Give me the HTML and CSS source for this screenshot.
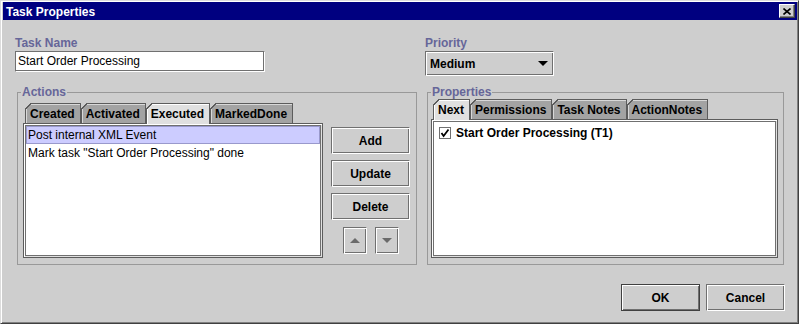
FILE: index.html
```html
<!DOCTYPE html>
<html lang="en">
<head>
    <meta charset="UTF-8">
    <meta name="viewport" content="width=device-width, initial-scale=1.0">
    <title>Task Properties</title>
    <link rel="stylesheet" href="styles.css">
</head>
<body>
    <div class="window">
        <div class="titlebar">
            <span class="title">Task Properties</span>
            <span class="close-btn">
                <svg width="8" height="7" viewBox="0 0 8 7">
                    <path d="M0.5 0.5 L7.5 6.5 M7.5 0.5 L0.5 6.5" stroke="#000" stroke-width="1.6" fill="none"/>
                </svg>
            </span>
        </div>

        <div class="content">
            <div class="form-grid">
                <div class="field">
                    <label class="field-label">Task Name</label>
                    <div class="textfield">Start Order Processing</div>
                </div>
                <div class="field">
                    <label class="field-label">Priority</label>
                    <div class="combo">
                        <span>Medium</span>
                        <span class="combo-arrow"></span>
                    </div>
                </div>

                <fieldset class="group">
                    <legend>Actions</legend>
                    <div class="group-body actions-body">
                        <div class="tabbed">
                            <div class="tabs">
                                <span class="tab">Created</span>
                                <span class="tab">Activated</span>
                                <span class="tab selected">Executed</span>
                                <span class="tab">MarkedDone</span>
                            </div>
                            <div class="tab-panel">
                                <div class="list">
                                    <div class="list-item selected">Post internal XML Event</div>
                                    <div class="list-item">Mark task "Start Order Processing" done</div>
                                </div>
                            </div>
                        </div>
                        <div class="side-buttons">
                            <button class="btn">Add</button>
                            <button class="btn">Update</button>
                            <button class="btn">Delete</button>
                            <div class="arrow-row">
                                <button class="arrow-btn"><span class="tri-up"></span></button>
                                <button class="arrow-btn"><span class="tri-down"></span></button>
                            </div>
                        </div>
                    </div>
                </fieldset>

                <fieldset class="group">
                    <legend>Properties</legend>
                    <div class="group-body props-body">
                        <div class="tabbed">
                            <div class="tabs">
                                <span class="tab selected">Next</span>
                                <span class="tab">Permissions</span>
                                <span class="tab">Task Notes</span>
                                <span class="tab">ActionNotes</span>
                            </div>
                            <div class="tab-panel">
                                <div class="list">
                                    <div class="check-row">
                                        <svg class="checkbox" width="12" height="12" viewBox="0 0 12 12">
                                            <rect x="0.5" y="0.5" width="11" height="11" fill="#fff" stroke="#707070"/>
                                            <path d="M2.5 6 L4.6 9 L9.5 2.5" stroke="#000" stroke-width="1.8" fill="none"/>
                                        </svg>
                                        <span>Start Order Processing (T1)</span>
                                    </div>
                                </div>
                            </div>
                        </div>
                    </div>
                </fieldset>
            </div>

            <div class="footer">
                <button class="btn default">OK</button>
                <button class="btn">Cancel</button>
            </div>
        </div>
    </div>
</body>
</html>
```

FILE: styles.css
```css
* {
    box-sizing: border-box;
}

body {
    margin: 0;
    font-family: "Liberation Sans", Arial, sans-serif;
    font-size: 12px;
    color: #000;
    background: #cecece;
}

.window {
    width: 799px;
    height: 324px;
    background: #cecece;
    border: 1px solid;
    border-color: #dcdcdc #404040 #404040 #dcdcdc;
    box-shadow: inset 1px 1px #fff, inset -1px -1px #808080;
    padding: 1px 1px 1px 2px;
}

.titlebar {
    height: 18px;
    background: #000080;
    display: flex;
    align-items: center;
    justify-content: space-between;
    padding: 0 2px 0 3px;
}

.title {
    color: #fff;
    font-weight: bold;
    line-height: 14px;
    padding-top: 1px;
}

.close-btn {
    width: 16px;
    height: 14px;
    background: #cecece;
    border: 1px solid;
    border-color: #fff #404040 #404040 #fff;
    box-shadow: inset -1px -1px #808080;
    display: flex;
    align-items: center;
    justify-content: center;
}

.content {
    padding: 16px 12px 0 12px;
}

.form-grid {
    display: grid;
    grid-template-columns: 402px 359px;
    grid-template-rows: auto 180px;
    column-gap: 8px;
    row-gap: 9px;
}

.field-label {
    display: block;
    font-weight: bold;
    color: #666699;
    line-height: 14px;
    margin-bottom: 1px;
}

/* etched look shared by inputs and buttons */
.textfield,
.combo,
.btn,
.arrow-btn {
    border: 1px solid;
    border-color: #707070 #fff #fff #707070;
    box-shadow: inset 1px 1px #fff, inset -1px -1px #707070;
}

.textfield {
    width: 250px;
    height: 21px;
    background: #fff;
    padding: 0 2px;
    line-height: 19px;
    box-shadow: inset -1px -1px #707070;
}

.combo {
    width: 129px;
    height: 25px;
    display: flex;
    align-items: center;
    justify-content: space-between;
    padding: 0 5px 0 4px;
    font-weight: bold;
}

.combo-arrow {
    width: 0;
    height: 0;
    border-left: 5px solid transparent;
    border-right: 5px solid transparent;
    border-top: 5px solid #000;
}

.group {
    margin: 0 0 0 2px;
    padding: 0;
    border: 1px solid #999;
    min-width: 0;
}

.group legend {
    margin-left: 3px;
    padding: 0 1px;
    color: #666699;
    font-weight: bold;
    line-height: 14px;
}

.group-body {
    height: 165px;
    display: flex;
}

.actions-body {
    gap: 8px;
    padding: 4px 6px 6px 5px;
}

.props-body {
    padding: 0 5px 6px 3px;
}

.tabbed {
    flex: 1;
    display: flex;
    flex-direction: column;
}

.tabs {
    display: flex;
    height: 20px;
    padding-left: 2px;
}

.tab {
    position: relative;
    height: 20px;
    padding: 1px 5px 0 4px;
    line-height: 19px;
    font-weight: bold;
    background: #a3a3a3;
    border: 1px solid #5c5c5c;
    border-bottom: 0;
    box-shadow: inset 1px 1px #d8d8d8;
}

.tab::before {
    content: "";
    position: absolute;
    left: -1px;
    top: -1px;
    width: 7px;
    height: 7px;
    background: linear-gradient(135deg, #cecece 0 calc(50% - 0.8px), #5c5c5c calc(50% - 0.8px) calc(50% + 0.6px), transparent calc(50% + 0.6px));
}

.tab.selected {
    background: #e0e0e0;
    height: 21px;
    margin-bottom: -1px;
    z-index: 1;
    box-shadow: inset 1px 1px #fff;
}

.tab-panel {
    flex: 1;
    display: flex;
    border: 1px solid #5c5c5c;
    background: #e0e0e0;
    box-shadow: inset 1px 1px #fff;
    padding: 1px;
}

.list {
    flex: 1;
    background: #fff;
    border: 1px solid #707070;
}

.list-item {
    height: 18px;
    line-height: 16px;
    border: 1px solid transparent;
    padding-left: 1px;
    white-space: nowrap;
}

.list-item.selected {
    background: #ccccff;
    border-color: #9999cc;
}

.check-row {
    display: flex;
    align-items: center;
    gap: 5px;
    padding: 4px 0 0 5px;
    line-height: 14px;
    font-weight: bold;
}

.side-buttons {
    width: 79px;
    display: flex;
    flex-direction: column;
    gap: 6px;
    padding-top: 24px;
}

.btn {
    height: 27px;
    width: 79px;
    background: #cecece;
    font: inherit;
    font-weight: bold;
    color: #000;
    padding: 0;
}

.btn.default {
    border-color: #404040;
}

.arrow-row {
    display: flex;
    justify-content: center;
    gap: 8px;
    margin-top: 1px;
}

.arrow-btn {
    width: 24px;
    height: 27px;
    background: #cecece;
    padding: 0;
    display: flex;
    align-items: center;
    justify-content: center;
}

.tri-up,
.tri-down {
    width: 0;
    height: 0;
    border-left: 5px solid transparent;
    border-right: 5px solid transparent;
}

.tri-up {
    border-bottom: 5px solid #6a6a6a;
}

.tri-down {
    border-top: 5px solid #6a6a6a;
}

.footer {
    display: flex;
    justify-content: flex-end;
    gap: 6px;
    margin-top: 19px;
}
```
